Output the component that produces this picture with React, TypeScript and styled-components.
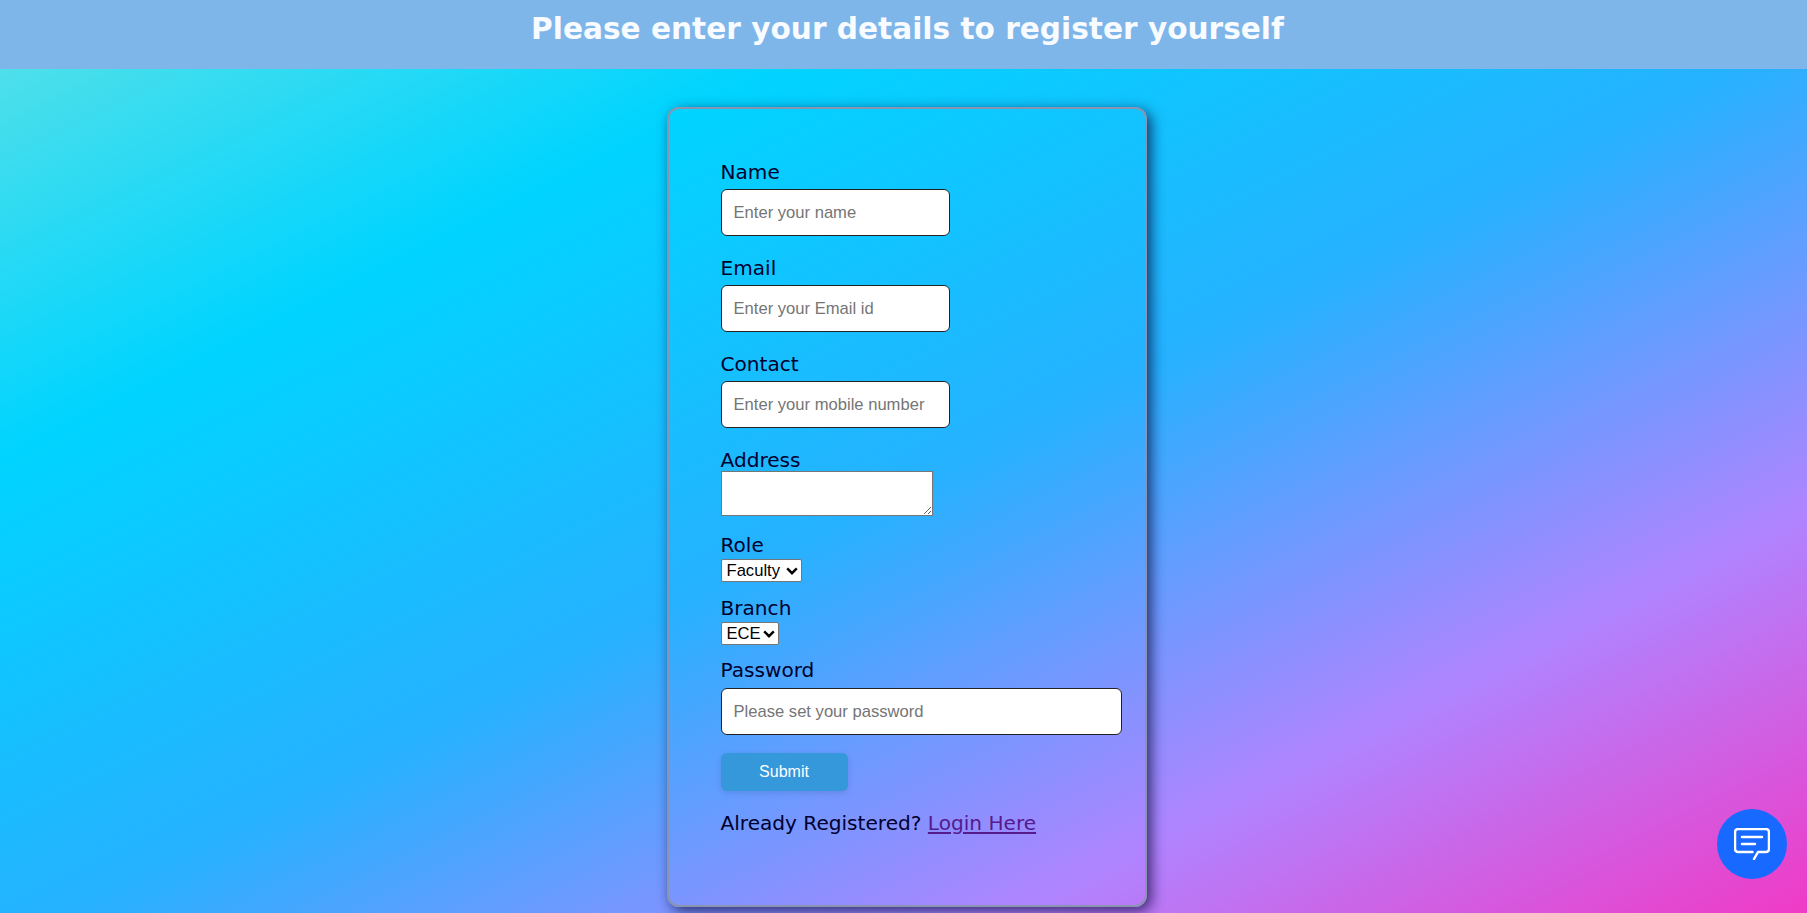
import React from 'react'
import { createGlobalStyle, styled } from 'styled-components'

const GlobalStyle = createGlobalStyle`
  * {
    box-sizing: border-box;
  }
  html,
  body {
    margin: 0;
    padding: 0;
    height: 913px;
    overflow: hidden;
  }
  body {
    font-family: 'DejaVu Sans', Verdana, sans-serif;
    background: linear-gradient(
      to bottom right,
      #5ce1e6 0%,
      #00d4ff 25%,
      #26b1ff 52%,
      #b084ff 78%,
      #f03ac6 100%
    );
  }
`

const chevron = encodeURIComponent(
  '<svg xmlns="http://www.w3.org/2000/svg" width="12" height="8" viewBox="0 0 12 8"><path d="M1.2 1.4 6 6.2l4.8-4.8" fill="none" stroke="#000" stroke-width="2.4"/></svg>'
)

const Page = styled.div`
  height: 913px;
  display: flex;
  flex-direction: column;
  align-items: center;
`

const Banner = styled.header`
  width: 100%;
  height: 69px;
  flex-shrink: 0;
  padding-left: 8px;
  background: #7eb6ea;
  text-align: center;
`

const Heading = styled.h1`
  margin: 0;
  padding-top: 11px;
  font-size: 29.6px;
  line-height: 36px;
  font-weight: 700;
  color: #f8fbff;
`

const Card = styled.main`
  width: 480px;
  height: 800px;
  margin: 38px 0 0 6px;
  padding: 52px 22px 0 52px;
  border: 2px solid #8a94b0;
  border-radius: 12px;
  box-shadow: 4px 4px 14px rgba(0, 0, 50, 0.7);
`

const Field = styled.div<{ $gap?: number }>`
  display: flex;
  flex-direction: column;
  align-items: flex-start;
  margin-bottom: ${(p) => p.$gap ?? 21}px;
`

const Label = styled.label<{ $gap?: number }>`
  display: block;
  font-size: 20.1px;
  line-height: 22px;
  color: #00002e;
  margin-bottom: ${(p) => p.$gap ?? 6}px;
`

const TextInput = styled.input<{ $wide?: boolean }>`
  width: ${(p) => (p.$wide ? '401px' : '229px')};
  height: 47px;
  padding: 0 12px;
  font-family: 'Liberation Sans', Arial, sans-serif;
  font-size: 16.6px;
  background: #fff;
  border: 1px solid #222;
  border-radius: 6px;

  &::placeholder {
    color: #757575;
  }
`

const Notes = styled.textarea`
  display: block;
  width: 212px;
  height: 45px;
  background: #fff;
  border: 1px solid #767676;
`

const Picker = styled.select<{ $width: number }>`
  appearance: none;
  width: ${(p) => p.$width}px;
  height: 23px;
  padding: 0 0 0 5px;
  font-family: 'Liberation Sans', Arial, sans-serif;
  font-size: 16.6px;
  color: #000;
  border: 1px solid #767676;
  border-radius: 2px;
  background: #fff url("data:image/svg+xml,${chevron}") no-repeat right 3px center;
`

const SubmitButton = styled.button`
  display: block;
  width: 127px;
  height: 38px;
  padding: 0;
  border: 0;
  border-radius: 6px;
  background: #3498db;
  color: #fff;
  font-family: 'Liberation Sans', Arial, sans-serif;
  font-size: 16px;
  box-shadow: 0 2px 6px rgba(0, 0, 60, 0.12);
`

const LoginLine = styled.p`
  margin: 20px 0 0;
  font-size: 20.1px;
  line-height: 24px;
  color: #00002e;

  a {
    color: #551a8b;
  }
`

const ChatButton = styled.div`
  position: fixed;
  right: 20px;
  bottom: 34px;
  width: 70px;
  height: 70px;
  border-radius: 50%;
  background: #1769ff;
  display: flex;
  align-items: center;
  justify-content: center;
`

const ChatIcon = () => (
  <svg width="36" height="32" viewBox="0 0 36 32" fill="none" stroke="#fff" strokeWidth="2.5" strokeLinecap="round" strokeLinejoin="round">
    <path d="M18.5 24H4a3 3 0 0 1-3-3V4a3 3 0 0 1 3-3h28a3 3 0 0 1 3 3v17a3 3 0 0 1-3 3h-8l-4 7" />
    <path d="M8 9h20M8 16h13" />
  </svg>
)

export default function App() {
  return (
    <Page>
      <GlobalStyle />
      <Banner>
        <Heading>Please enter your details to register yourself</Heading>
      </Banner>
      <Card>
        <form>
          <Field>
            <Label>Name</Label>
            <TextInput placeholder="Enter your name" />
          </Field>
          <Field>
            <Label>Email</Label>
            <TextInput placeholder="Enter your Email id" />
          </Field>
          <Field>
            <Label>Contact</Label>
            <TextInput placeholder="Enter your mobile number" />
          </Field>
          <Field $gap={18}>
            <Label $gap={0}>Address</Label>
            <Notes />
          </Field>
          <Field $gap={15}>
            <Label $gap={3}>Role</Label>
            <Picker $width={81} defaultValue="Faculty">
              <option>Faculty</option>
              <option>Student</option>
            </Picker>
          </Field>
          <Field $gap={14}>
            <Label $gap={3}>Branch</Label>
            <Picker $width={58} defaultValue="ECE">
              <option>ECE</option>
              <option>CSE</option>
            </Picker>
          </Field>
          <Field $gap={18}>
            <Label $gap={7}>Password</Label>
            <TextInput $wide type="password" placeholder="Please set your password" />
          </Field>
          <SubmitButton type="button">Submit</SubmitButton>
          <LoginLine>
            Already Registered? <a href="#login">Login Here</a>
          </LoginLine>
        </form>
      </Card>
      <ChatButton>
        <ChatIcon />
      </ChatButton>
    </Page>
  )
}
